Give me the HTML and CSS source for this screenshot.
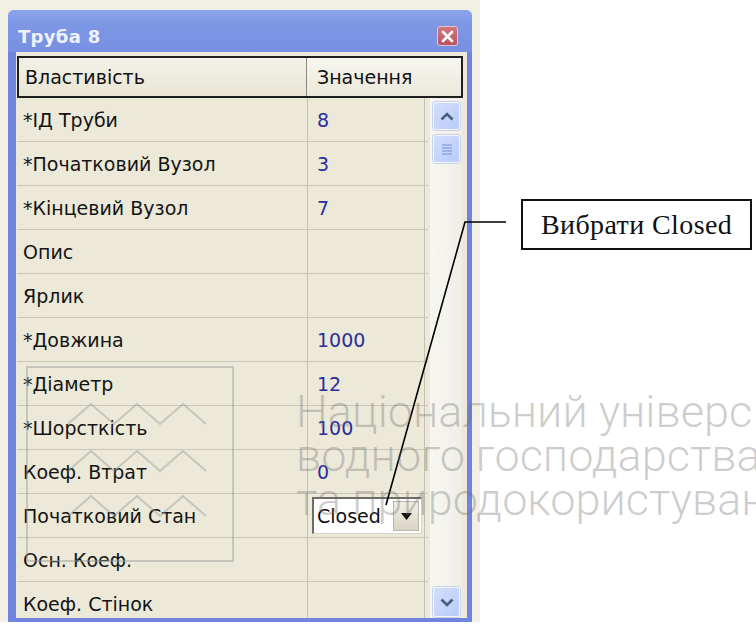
FILE: index.html
```html
<!DOCTYPE html>
<html lang="uk">
<head>
<meta charset="utf-8">
<title>Труба 8</title>
<link rel="stylesheet" href="styles.css">
</head>
<body>
<div class="stage">
  <div class="window">
    <div class="titlebar">
      <span class="title">Труба 8</span>
      <span class="close" aria-label="Закрити">
        <svg width="13" height="13" viewBox="0 0 13 13"><path d="M2 2 L11 11 M11 2 L2 11" stroke="#fff" stroke-width="2.6" stroke-linecap="round"/></svg>
      </span>
    </div>
    <div class="client">
      <div class="head">
        <div class="hcell hname">Властивість</div>
        <div class="hcell hval">Значення</div>
      </div>
      <div class="grid-wrap">
        <div class="props">
          <div class="row"><div class="name">*ІД Труби</div><div class="val">8</div></div>
          <div class="row"><div class="name">*Початковий Вузол</div><div class="val">3</div></div>
          <div class="row"><div class="name">*Кінцевий Вузол</div><div class="val">7</div></div>
          <div class="row"><div class="name">Опис</div><div class="val"></div></div>
          <div class="row"><div class="name">Ярлик</div><div class="val"></div></div>
          <div class="row"><div class="name">*Довжина</div><div class="val">1000</div></div>
          <div class="row"><div class="name">*Діаметр</div><div class="val">12</div></div>
          <div class="row"><div class="name">*Шорсткість</div><div class="val">100</div></div>
          <div class="row"><div class="name">Коеф. Втрат</div><div class="val">0</div></div>
          <div class="row"><div class="name">Початковий Стан</div>
            <div class="val">
              <div class="combo">
                <span class="combo-text">Closed</span>
                <span class="combo-btn"><svg width="11" height="7" viewBox="0 0 11 7"><path d="M0 0 H11 L5.5 7 Z" fill="#111"/></svg></span>
              </div>
            </div>
          </div>
          <div class="row"><div class="name">Осн. Коеф.</div><div class="val"></div></div>
          <div class="row"><div class="name">Коеф. Стінок</div><div class="val"></div></div>
        </div>
        <div class="scrollbar">
          <div class="sbtn">
            <svg width="14" height="9" viewBox="0 0 14 9"><path d="M1.5 7.5 L7 2 L12.5 7.5" fill="none" stroke="#4a5d80" stroke-width="2.6"/></svg>
          </div>
          <div class="thumb">
            <svg width="12" height="12" viewBox="0 0 12 12"><path d="M1 2 H11 M1 5 H11 M1 8 H11 M1 11 H11" stroke="#8ea6e6" stroke-width="1.4"/></svg>
          </div>
          <div class="track"></div>
          <div class="sbtn sbtn-down">
            <svg width="14" height="9" viewBox="0 0 14 9"><path d="M1.5 1.5 L7 7 L12.5 1.5" fill="none" stroke="#4a5d80" stroke-width="2.6"/></svg>
          </div>
        </div>
      </div>
    </div>
  </div>
</div>

<!-- callout label pointing at the combo box -->
<div class="callout">Вибрати Closed</div>
<svg class="leader" width="756" height="626" viewBox="0 0 756 626">
  <path d="M506 222 H465 L386 505" fill="none" stroke="#000" stroke-width="1.6"/>
</svg>

<!-- faint watermark laid over the page -->
<div class="watermark">
  <svg class="wm-logo" width="210" height="200" viewBox="0 0 210 200">
    <rect x="1" y="1" width="206" height="194" fill="none" stroke="#9a9a9a" stroke-width="2"/>
    <path d="M42 58 L65 38 L88 58 L111 38 L134 58 L157 38 L180 58" fill="none" stroke="#9a9a9a" stroke-width="2"/>
    <path d="M42 105 L65 85 L88 105 L111 85 L134 105 L157 85 L180 105" fill="none" stroke="#9a9a9a" stroke-width="2"/>
    <path d="M42 150 L65 130 L88 150 L111 130 L134 150 L157 130 L180 150" fill="none" stroke="#9a9a9a" stroke-width="2"/>
  </svg>
  <div class="wm-text">
    <div>Національний універс</div>
    <div>водного господарства</div>
    <div>та природокористуван</div>
  </div>
</div>
</body>
</html>
```
FILE: styles.css
```css
* { box-sizing: border-box; }

html, body {
  margin: 0;
  padding: 0;
  background: #ffffff;
  width: 756px;
  height: 626px;
  overflow: hidden;
}

body {
  position: relative;
  font-family: "DejaVu Sans", "Liberation Sans", sans-serif;
}

.stage {
  width: 480px;
  height: 622px;
  padding: 10px 8px 0 8px;
  background: #f2efe5;
}

.window {
  width: 464px;
  height: 612px;
  display: flex;
  flex-direction: column;
  background: #6f84de;
  border-radius: 6px 6px 0 0;
}

.titlebar {
  height: 42px;
  display: flex;
  align-items: center;
  justify-content: space-between;
  padding: 10px 14px 0 10px;
  border-radius: 6px 6px 0 0;
  background: linear-gradient(#8ea6ec 0%, #7d97e5 35%, #7890e2 100%);
}

.title {
  color: #eef2fd;
  font-weight: bold;
  font-size: 18px;
  letter-spacing: 0.3px;
}

.close {
  width: 21px;
  height: 20px;
  display: flex;
  align-items: center;
  justify-content: center;
  background: linear-gradient(#d27780, #bb5460);
  border: 1px solid #e6c3c8;
  border-radius: 3px;
}

.client {
  flex: 1;
  margin: 0 5px 4px 8px;
  padding: 4px 4px 0 1px;
  background: #ece9d8;
  display: flex;
  flex-direction: column;
  min-height: 0;
  overflow: hidden;
}

.head {
  height: 42px;
  flex: none;
  display: flex;
  border: 2px solid #1e1e1e;
  background: linear-gradient(#f3f1e7, #e9e6d6);
  font-size: 19px;
  color: #111;
}

.hcell {
  display: flex;
  align-items: center;
}

.hname {
  width: 288px;
  padding-left: 6px;
  border-right: 1px solid #8c8a80;
}

.hval {
  flex: 1;
  padding-left: 10px;
  background: linear-gradient(#f7f6f0, #ebe8da);
}

.grid-wrap {
  flex: 1;
  display: flex;
  gap: 2px;
  min-height: 0;
}

.props {
  width: 411px;
  display: flex;
  flex-direction: column;
  overflow: hidden;
}

.row {
  height: 44px;
  flex: none;
  display: flex;
  border-bottom: 1px solid #c9c6b6;
  font-size: 19px;
}

.name {
  width: 290px;
  padding-left: 6px;
  display: flex;
  align-items: center;
  color: #141414;
  white-space: nowrap;
}

.val {
  width: 118px;
  padding-left: 9px;
  display: flex;
  align-items: center;
  color: #2b2d9c;
  border-left: 1px solid #c3c0b0;
  border-right: 1px solid #c3c0b0;
}

.combo {
  margin-left: -5px;
  width: 110px;
  height: 37px;
  display: flex;
  align-items: center;
  background: #ffffff;
  border-top: 2px solid #6f6d66;
  border-left: 2px solid #6f6d66;
  border-right: 1px solid #d8d5c8;
  border-bottom: 1px solid #d8d5c8;
  color: #111;
}

.combo-text {
  flex: 1;
  padding-left: 3px;
}

.combo-btn {
  width: 26px;
  height: 30px;
  margin-right: 2px;
  display: flex;
  align-items: center;
  justify-content: center;
  background: linear-gradient(#f1efe6, #d9d5c4);
  border: 1px solid #b9b5a4;
}

.scrollbar {
  width: 32px;
  display: flex;
  flex-direction: column;
  padding: 4px 2px 1px 3px;
  background: linear-gradient(90deg, #f7f6f1, #efeee6);
}

.sbtn,
.thumb {
  height: 28px;
  flex: none;
  display: flex;
  align-items: center;
  justify-content: center;
  border: 1px solid #f4f6fd;
  border-radius: 3px;
  background: linear-gradient(135deg, #d3defc, #b9cbf8);
  box-shadow: 0 0 0 1px #c8d2ec;
}

.thumb {
  margin-top: 5px;
}

.track {
  flex: 1;
}

.sbtn-down {
  height: 30px;
}

.callout {
  position: absolute;
  left: 521px;
  top: 199px;
  width: 231px;
  height: 51px;
  border: 2px solid #111;
  background: #fff;
  font-family: "Liberation Serif", "Times New Roman", serif;
  font-size: 28px;
  letter-spacing: 0.4px;
  color: #111;
  display: flex;
  align-items: center;
  padding-left: 18px;
}

.leader {
  position: absolute;
  left: 0;
  top: 0;
  pointer-events: none;
}

.watermark {
  position: absolute;
  left: 0;
  top: 0;
  width: 756px;
  height: 626px;
  pointer-events: none;
}

.wm-logo {
  position: absolute;
  left: 26px;
  top: 366px;
  opacity: 0.45;
}

.wm-text {
  position: absolute;
  left: 296px;
  top: 390px;
  font-family: Roboto, "DejaVu Sans", sans-serif;
  font-weight: 300;
  font-size: 45px;
  line-height: 44px;
  color: rgba(110, 110, 110, 0.34);
  white-space: nowrap;
}
```
